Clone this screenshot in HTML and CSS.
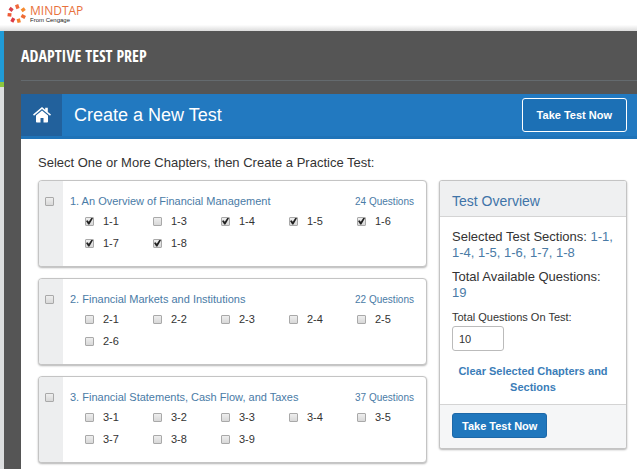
FILE: index.html
```html
<!DOCTYPE html>
<html lang="en">
<head>
  <meta charset="UTF-8" />
  <meta name="viewport" content="width=device-width, initial-scale=1.0"/>
  <title>Adaptive Test Prep</title>
  <link rel="stylesheet" href="styles.css">
</head>
<body>

<header class="topbar">
  <svg class="logo" viewBox="0 0 20 20" aria-hidden="true">
    <g stroke-width="3.4" fill="none">
      <path d="M9.600 .6l1.400 4" stroke="#f0683a"/>
      <path d="M14.600 6.800l3.200-2.200" stroke="#f58a2e"/>
      <path d="M14.400 11.400l3.800 2" stroke="#ef6c34"/>
      <path d="M11.200 14.800l1 3.800" stroke="#f5822d"/>
      <path d="M6.800 14.200l-2 3.600" stroke="#dd3a45"/>
      <path d="M4.400 11l-3.800-.4" stroke="#ee5a36"/>
      <path d="M5.600 6.600l-3-2.400" stroke="#d9414b"/>
    </g>
  </svg>
  <div class="brand">
    <span class="brand-name">MINDTAP</span>
    <span class="brand-sub">From Cengage</span>
  </div>
</header>

<div class="page">
  <div class="rail">
    <div class="rail-blue"></div>
    <div class="rail-green"></div>
  </div>

  <main class="main">
    <h1 class="page-title">ADAPTIVE TEST PREP</h1>

    <section class="panel">
      <div class="panel-header">
        <a class="home" href="#" aria-label="Home">
          <svg viewBox="0 0 18 16" aria-hidden="true">
            <path fill="#fff" d="M9 3.400l6 5.200v6.200a.8.8 0 0 1-.8.8h-3.700v-4.600h-3v4.600H3.800a.8.8 0 0 1-.8-.8V8.600z"/>
            <path fill="#fff" d="M9 0l3.200 2.700V.8h2.600v4.100L18 7.600l-1 1.200-8-6.900-8 6.900L0 7.600z"/>
          </svg>
        </a>
        <h2 class="panel-title">Create a New Test</h2>
        <button class="take-test outline" type="button">Take Test Now</button>
      </div>

      <div class="panel-body">
        <p class="intro">Select One or More Chapters, then Create a Practice Test:</p>

        <div class="columns">
          <div class="chapters">
            <article class="chapter">
              <div class="chapter-check"><input type="checkbox" aria-label="Chapter 1"></div>
              <div class="chapter-body">
                <div class="chapter-head">
                  <a href="#">1. An Overview of Financial Management</a>
                  <a class="count" href="#">24 Questions</a>
                </div>
                <div class="sections">
                  <label><input type="checkbox" checked>1-1</label>
                  <label><input type="checkbox">1-3</label>
                  <label><input type="checkbox" checked>1-4</label>
                  <label><input type="checkbox" checked>1-5</label>
                  <label><input type="checkbox" checked>1-6</label>
                  <label><input type="checkbox" checked>1-7</label>
                  <label><input type="checkbox" checked>1-8</label>
                </div>
              </div>
            </article>

            <article class="chapter">
              <div class="chapter-check"><input type="checkbox" aria-label="Chapter 2"></div>
              <div class="chapter-body">
                <div class="chapter-head">
                  <a href="#">2. Financial Markets and Institutions</a>
                  <a class="count" href="#">22 Questions</a>
                </div>
                <div class="sections">
                  <label><input type="checkbox">2-1</label>
                  <label><input type="checkbox">2-2</label>
                  <label><input type="checkbox">2-3</label>
                  <label><input type="checkbox">2-4</label>
                  <label><input type="checkbox">2-5</label>
                  <label><input type="checkbox">2-6</label>
                </div>
              </div>
            </article>

            <article class="chapter">
              <div class="chapter-check"><input type="checkbox" aria-label="Chapter 3"></div>
              <div class="chapter-body">
                <div class="chapter-head">
                  <a href="#">3. Financial Statements, Cash Flow, and Taxes</a>
                  <a class="count" href="#">37 Questions</a>
                </div>
                <div class="sections">
                  <label><input type="checkbox">3-1</label>
                  <label><input type="checkbox">3-2</label>
                  <label><input type="checkbox">3-3</label>
                  <label><input type="checkbox">3-4</label>
                  <label><input type="checkbox">3-5</label>
                  <label><input type="checkbox">3-7</label>
                  <label><input type="checkbox">3-8</label>
                  <label><input type="checkbox">3-9</label>
                </div>
              </div>
            </article>
          </div>

          <aside class="overview">
            <h3 class="overview-title">Test Overview</h3>
            <div class="overview-body">
              <p>Selected Test Sections: <span class="value">1-1, 1-4, 1-5, 1-6, 1-7, 1-8</span></p>
              <p>Total Available Questions: <span class="value">19</span></p>
              <label class="total-label" for="total">Total Questions On Test:</label>
              <input class="total" id="total" type="text" value="10">
              <a class="clear" href="#">Clear Selected Chapters and Sections</a>
            </div>
            <div class="overview-footer">
              <button class="take-test" type="button">Take Test Now</button>
            </div>
          </aside>
        </div>
      </div>
    </section>
  </main>
</div>

</body>
</html>
```

FILE: styles.css
```css
* {
  box-sizing: border-box;
}

body {
  margin: 0;
  min-height: 100vh;
  display: flex;
  flex-direction: column;
  font-family: "Liberation Sans", Arial, sans-serif;
  font-size: 11px;
  color: #333;
  background: #fff;
}

a {
  color: #4a7ba6;
  text-decoration: none;
}

h1, h2, h3, p {
  margin: 0;
  font-weight: normal;
}

/* top bar */
.topbar {
  display: flex;
  gap: 3px;
  height: 31px;
  padding: 4px 7px;
  background: linear-gradient(#fff 80%, #dcdcdc);
}

.logo {
  width: 20px;
  height: 20px;
}

.brand {
  display: flex;
  flex-direction: column;
}

.brand-name {
  font-family: "Open Sans", sans-serif;
  font-size: 12px;
  line-height: 13px;
  color: #e8713c;
}

.brand-sub {
  font-family: "Liberation Sans", sans-serif;
  font-size: 6px;
  line-height: 7px;
  color: #222;
}

/* page frame */
.page {
  display: flex;
  flex: 1;
}

.rail {
  width: 4px;
  background: #dcdedf;
}

.rail-blue {
  height: 51px;
  background: #1f9bd7;
}

.rail-green {
  height: 5px;
  background: #8cc63f;
}

.main {
  flex: 1;
  display: flex;
  flex-direction: column;
  padding-left: 17px;
  background: #555;
}

.page-title {
  height: 50px;
  margin-bottom: 13px;
  border-bottom: 1px solid #646a6e;
  font-family: "Open Sans Condensed", "Roboto Condensed", "Liberation Sans Narrow", "Noto Sans Condensed", "Liberation Sans", sans-serif;
  font-size: 16px;
  font-weight: bold;
  line-height: 50px;
  color: #fff;
}

.panel {
  flex: 1;
  background: #fff;
}

.panel-header {
  display: flex;
  align-items: center;
  height: 45px;
  padding-right: 10px;
  background: #2279c0;
  border-bottom: 3px solid #1f73b8;
}

.home {
  display: flex;
  align-items: center;
  justify-content: center;
  width: 41px;
  height: 42px;
  background: #22619c;
}

.home svg {
  width: 18px;
  height: 16px;
}

.panel-title {
  flex: 1;
  padding-left: 12px;
  font-size: 18px;
  color: #fff;
}

.take-test {
  height: 25px;
  padding: 0 9px;
  border: 1px solid #1d68a8;
  border-radius: 3px;
  background: #2077bd;
  font-family: inherit;
  font-size: 11px;
  font-weight: bold;
  color: #fff;
  cursor: pointer;
}

.outline {
  height: 34px;
  padding: 0 14px;
  border-color: #fff;
  background: #1c70b5;
}

.panel-body {
  padding: 15px 10px 15px 17px;
}

.intro {
  margin-bottom: 8px;
  font-size: 13px;
  line-height: 18px;
}

.columns {
  display: grid;
  grid-template-columns: 1fr 188px;
  gap: 12px;
  align-items: start;
}

/* chapter cards */
.chapters {
  display: grid;
  gap: 11px;
}

.chapter {
  display: flex;
  min-height: 87px;
  border: 1px solid #c4c4c4;
  border-radius: 4px;
  background: #fff;
  box-shadow: 0 1px 2px rgba(0, 0, 0, 0.3);
  overflow: hidden;
}

.chapter-check {
  flex: none;
  width: 24px;
  padding: 16px 6px;
  background: #edeeef;
}

.chapter-body {
  flex: 1;
  min-width: 0;
  padding: 12px 12px 12px 7px;
}

.chapter-head {
  display: flex;
  justify-content: space-between;
  line-height: 17px;
}

.count {
  font-size: 10px;
}

.sections {
  display: grid;
  grid-template-columns: repeat(5, 68px);
  padding-left: 15px;
}

.sections label {
  display: flex;
  align-items: center;
  gap: 9px;
  height: 22px;
}

input[type="checkbox"] {
  appearance: none;
  display: block;
  width: 9px;
  height: 9px;
  margin: 0;
  border: 1px solid #a9a9a9;
  border-radius: 1px;
  background: linear-gradient(#eee, #d8d8d8);
}

input[type="checkbox"]:checked::before {
  content: "";
  display: block;
  width: 7px;
  height: 7px;
  background: #222;
  clip-path: polygon(0 50%, 22% 38%, 40% 62%, 80% 0, 100% 12%, 48% 100%, 32% 100%);
}

/* overview */
.overview {
  border: 1px solid #c4c4c4;
  border-radius: 3px;
  background: #fff;
  box-shadow: 0 1px 2px rgba(0, 0, 0, 0.3);
  overflow: hidden;
}

.overview-title {
  height: 36px;
  padding-left: 12px;
  border-bottom: 1px solid #d4d4d4;
  background: #eff0f1;
  font-size: 14px;
  line-height: 41px;
  color: #3f74a8;
}

.overview-body {
  padding: 12px 12px 9px;
}

.overview-body p {
  margin-bottom: 8px;
  font-size: 13px;
  line-height: 16px;
}

.value {
  color: #4a7ba6;
}

.total-label {
  display: block;
  margin-bottom: 1px;
  line-height: 16px;
}

.total {
  display: block;
  width: 52px;
  height: 25px;
  padding: 0 6px;
  border: 1px solid #bbb;
  border-radius: 3px;
  font-family: inherit;
  font-size: 11px;
  color: #333;
}

.clear {
  display: block;
  margin-top: 12px;
  font-weight: bold;
  line-height: 16px;
  text-align: center;
  color: #3b7db8;
}

.overview-footer {
  padding: 8px 12px 10px;
  border-top: 1px solid #d4d4d4;
  background: #f5f6f7;
}
```
